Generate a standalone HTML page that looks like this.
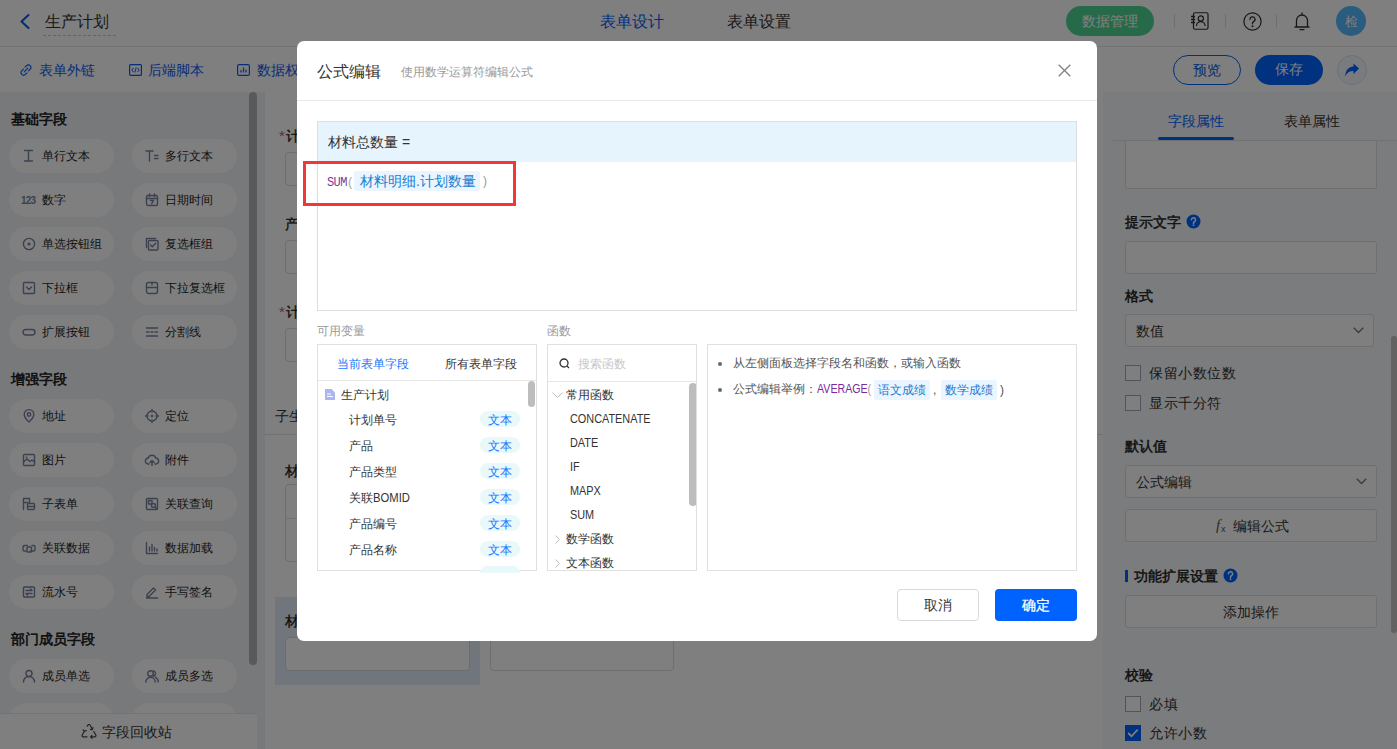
<!DOCTYPE html>
<html><head><meta charset="utf-8">
<style>
*{box-sizing:border-box;margin:0;padding:0}
html,body{width:1397px;height:749px;overflow:hidden;background:#fff;font-family:"Liberation Sans",sans-serif;color:#333}
.a{position:absolute}
.t{position:absolute;white-space:nowrap;line-height:1}
/* header */
#hdr{left:0;top:0;width:1397px;height:47px;background:#fff;border-bottom:1px solid #e6e6e6}
#tb{left:0;top:47px;width:1397px;height:45px;background:#fff}
#side{left:0;top:92px;width:265px;height:657px;background:#f1f3f6}
.pill{position:absolute;width:105px;height:34px;border-radius:17px;background:#fff}
.pill span{position:absolute;left:33px;top:11px;font-size:12px;line-height:12px;color:#1f1f1f;white-space:nowrap}
.pill svg{position:absolute;left:13px;top:10px;overflow:visible}
.sh{position:absolute;left:11px;font-size:14px;font-weight:400;-webkit-text-stroke:0.55px #1a1a1a;color:#1a1a1a;line-height:14px;white-space:nowrap}
#canvas{left:265px;top:92px;width:838px;height:657px;background:#fff}
#panel{left:1103px;top:92px;width:294px;height:657px;background:#f7f8fa}
.inp{position:absolute;left:1125px;width:252px;height:33px;border:1px solid #dedede;border-radius:3px;background:#fff}
.lbl{position:absolute;left:1125px;font-size:14px;font-weight:400;-webkit-text-stroke:0.45px #222;color:#222;line-height:14px;white-space:nowrap}
.cb{position:absolute;left:1125px;width:16px;height:16px;border:1px solid #a4a8b4;border-radius:0;background:#fff}
.cbt{position:absolute;left:1149px;font-size:14px;color:#333;line-height:14px;white-space:nowrap;letter-spacing:0.6px}
#mask{left:0;top:0;width:1397px;height:749px;background:rgba(0,0,0,0.5)}
#modal{left:297px;top:41px;width:800px;height:600px;background:#fff;border-radius:7px;overflow:hidden}
</style></head><body>
<!-- HEADER -->
<div id="hdr" class="a"></div>
<svg class="a" style="left:18px;top:13px" width="14" height="17" viewBox="0 0 14 17"><path d="M10.5 2 L3.5 8.5 L10.5 15" fill="none" stroke="#0a5af0" stroke-width="2.1" stroke-linecap="round" stroke-linejoin="round"/></svg>
<div class="t" style="left:45px;top:14px;font-size:16px;color:#333">生产计划</div>
<div class="a" style="left:43px;top:35px;width:73px;border-top:1px dashed #c8c8c8"></div>
<div class="t" style="left:600px;top:14px;font-size:16px;color:#0a5ef5">表单设计</div>
<div class="t" style="left:727px;top:14px;font-size:16px;color:#333">表单设置</div>
<div class="a" style="left:1066px;top:6px;width:88px;height:30px;border-radius:15px;background:#4dd592"></div>
<div class="t" style="left:1082px;top:14px;font-size:14px;color:#fff">数据管理</div>
<div class="a" style="left:1174px;top:14px;width:1px;height:14px;background:#ddd"></div>
<div class="a" style="left:1225px;top:14px;width:1px;height:14px;background:#ddd"></div>
<div class="a" style="left:1276px;top:14px;width:1px;height:14px;background:#ddd"></div>
<div class="a" style="left:1336px;top:6px;width:30px;height:30px;border-radius:15px;background:#52b8fd"></div>
<div class="t" style="left:1345px;top:15px;font-size:13px;color:#fff">检</div>
<!-- TOOLBAR -->
<div id="tb" class="a"></div>
<div class="t" style="left:39px;top:63px;font-size:14px;color:#0d5cf0">表单外链</div>
<div class="t" style="left:148px;top:63px;font-size:14px;color:#0d5cf0">后端脚本</div>
<div class="t" style="left:257px;top:63px;font-size:14px;color:#0d5cf0">数据权限</div>
<div class="a" style="left:1173px;top:55px;width:68px;height:30px;border-radius:15px;border:1px solid #0062ff"></div>
<div class="t" style="left:1193px;top:63px;font-size:14px;color:#0a55e0">预览</div>
<div class="a" style="left:1255px;top:55px;width:68px;height:30px;border-radius:15px;background:#0064ff"></div>
<div class="t" style="left:1275px;top:62px;font-size:14px;color:#fff">保存</div>
<div class="a" style="left:1337px;top:55px;width:30px;height:30px;border-radius:15px;border:1px solid #d5e0fa;background:#f4f7fe"></div>

<svg class="a" style="left:1190px;top:12px" width="19" height="18" viewBox="0 0 19 18"><rect x="3.5" y="0.75" width="14.5" height="16.5" rx="1.5" fill="none" stroke="#2e2e2e" stroke-width="1.2"/><circle cx="10.8" cy="6.5" r="2.6" fill="none" stroke="#2e2e2e" stroke-width="1.2"/><path d="M6.5 14a4.3 4.3 0 0 1 8.6 0" fill="none" stroke="#2e2e2e" stroke-width="1.2"/><path d="M1 4.5h4M1 7.5h4M1 10.5h4" stroke="#2e2e2e" stroke-width="1.3"/></svg>
<svg class="a" style="left:1243px;top:12px" width="19" height="19" viewBox="0 0 19 19"><circle cx="9.5" cy="9.5" r="8.6" fill="none" stroke="#2e2e2e" stroke-width="1.2"/><path d="M7 7.3a2.5 2.5 0 1 1 3.5 2.3c-.7.4-1 .8-1 1.6v.6" fill="none" stroke="#2e2e2e" stroke-width="1.3" stroke-linecap="round"/><circle cx="9.5" cy="14.2" r="1" fill="#333"/></svg>
<svg class="a" style="left:1294px;top:12px" width="16" height="19" viewBox="0 0 16 19"><path d="M8 1v1.5M2.5 15V8.5a5.5 5.5 0 0 1 11 0V15M1 15h14M6 17.6h4" fill="none" stroke="#2e2e2e" stroke-width="1.3" stroke-linecap="round"/></svg>
<svg class="a" style="left:20px;top:64px" width="12" height="12" viewBox="0 0 12 12"><path d="M5 3.2l1.6-1.6a2.5 2.5 0 0 1 3.6 3.6L8.6 6.8M7 8.8L5.4 10.4a2.5 2.5 0 0 1-3.6-3.6L3.4 5.2M4.2 7.8l3.6-3.6" fill="none" stroke="#0d5cf0" stroke-width="1.2" stroke-linecap="round"/></svg>
<svg class="a" style="left:129px;top:64px" width="13" height="12" viewBox="0 0 13 12"><rect x="0.6" y="0.6" width="11.8" height="10.8" rx="1" fill="none" stroke="#0d5cf0" stroke-width="1.2"/><path d="M4.5 4L2.8 6l1.7 2M8.5 4l1.7 2-1.7 2M7.2 3.5L5.8 8.5" fill="none" stroke="#0d5cf0" stroke-width="1"/></svg>
<svg class="a" style="left:237px;top:64px" width="13" height="12" viewBox="0 0 13 12"><rect x="0.6" y="0.6" width="11.8" height="10.8" rx="1.5" fill="none" stroke="#0d5cf0" stroke-width="1.2"/><path d="M4 8.5V6M6.5 8.5V3.5M9 8.5V5.5" stroke="#0d5cf0" stroke-width="1.2"/></svg>
<svg class="a" style="left:1344px;top:63px" width="16" height="14" viewBox="0 0 15 14"><path d="M14.5 5.5L9 0.5v3C4 3.8 0.8 7.5 0.8 13.5c1.5-3.8 4.2-5.5 8.2-5.5v3z" fill="#0062ff"/></svg>
<!-- SIDEBAR -->
<div id="side" class="a"></div>
<div class="sh" style="top:112px">基础字段</div>
<div class="sh" style="top:372px">增强字段</div>
<div class="sh" style="top:632px">部门成员字段</div>
<div id="pills">
<div class="pill" style="left:9px;top:139px"><svg width="14" height="14" viewBox="0 0 14 14"><path d="M2.5 1.5h8M6.5 1.5v10.5M2.5 12h8" fill="none" stroke="#76829e" stroke-width="1.4" stroke-linecap="round" stroke-linejoin="round"/></svg><span>单行文本</span></div>
<div class="pill" style="left:132px;top:139px"><svg width="14" height="14" viewBox="0 0 14 14"><path d="M1 2h7M4.5 2v10M9.5 6.5h3.5M9.5 9.5h3.5" fill="none" stroke="#76829e" stroke-width="1.4" stroke-linecap="round" stroke-linejoin="round"/></svg><span>多行文本</span></div>
<div class="pill" style="left:9px;top:183px"><svg width="14" height="14" viewBox="0 0 14 14"><text x="-1" y="11" font-family="Liberation Sans" font-weight="bold" font-size="10" fill="#76829e" textLength="15">123</text></svg><span>数字</span></div>
<div class="pill" style="left:132px;top:183px"><svg width="14" height="14" viewBox="0 0 14 14"><rect x="1.5" y="2.5" width="11" height="10" rx="1.5" fill="none" stroke="#76829e" stroke-width="1.4" stroke-linecap="round" stroke-linejoin="round"/><path d="M1.5 5.5h11M4.5 1v2.5M9.5 1v2.5M5.5 7.5h3l-2 3.5" fill="none" stroke="#76829e" stroke-width="1.4" stroke-linecap="round" stroke-linejoin="round"/></svg><span>日期时间</span></div>
<div class="pill" style="left:9px;top:227px"><svg width="14" height="14" viewBox="0 0 14 14"><circle cx="7" cy="7" r="5.6" fill="none" stroke="#76829e" stroke-width="1.4" stroke-linecap="round" stroke-linejoin="round"/><circle cx="7" cy="7" r="1.6" fill="#76829e"/></svg><span>单选按钮组</span></div>
<div class="pill" style="left:132px;top:227px"><svg width="14" height="14" viewBox="0 0 14 14"><path d="M1.5 10.5v-9h9" fill="none" stroke="#76829e" stroke-width="1.4" stroke-linecap="round" stroke-linejoin="round"/><rect x="3.5" y="3.5" width="9.5" height="9.5" rx="1" fill="none" stroke="#76829e" stroke-width="1.4" stroke-linecap="round" stroke-linejoin="round"/><path d="M5.5 8l1.8 1.8 3.4-3.6" fill="none" stroke="#76829e" stroke-width="1.4" stroke-linecap="round" stroke-linejoin="round"/></svg><span>复选框组</span></div>
<div class="pill" style="left:9px;top:271px"><svg width="14" height="14" viewBox="0 0 14 14"><rect x="1.5" y="1.5" width="11" height="11" rx="1" fill="none" stroke="#76829e" stroke-width="1.4" stroke-linecap="round" stroke-linejoin="round"/><path d="M4.5 6l2.5 2.5 2.5-2.5" fill="none" stroke="#76829e" stroke-width="1.4" stroke-linecap="round" stroke-linejoin="round"/></svg><span>下拉框</span></div>
<div class="pill" style="left:132px;top:271px"><svg width="14" height="14" viewBox="0 0 14 14"><rect x="1.5" y="1.5" width="11" height="11" rx="2" fill="none" stroke="#76829e" stroke-width="1.4" stroke-linecap="round" stroke-linejoin="round"/><path d="M1.5 6.5h11M7 1.5v2.5" fill="none" stroke="#76829e" stroke-width="1.4" stroke-linecap="round" stroke-linejoin="round"/></svg><span>下拉复选框</span></div>
<div class="pill" style="left:9px;top:315px"><svg width="14" height="14" viewBox="0 0 14 14"><rect x="1" y="4.5" width="12" height="5.5" rx="2.75" fill="none" stroke="#76829e" stroke-width="1.4" stroke-linecap="round" stroke-linejoin="round"/></svg><span>扩展按钮</span></div>
<div class="pill" style="left:132px;top:315px"><svg width="14" height="14" viewBox="0 0 14 14"><path d="M1.5 3h11M1.5 7h2.5M6 7h2M10 7h2.5M1.5 11h11" fill="none" stroke="#76829e" stroke-width="1.4" stroke-linecap="round" stroke-linejoin="round"/></svg><span>分割线</span></div>
<div class="pill" style="left:9px;top:399px"><svg width="14" height="14" viewBox="0 0 14 14"><path d="M7 13s-4.8-4.6-4.8-7.6a4.8 4.8 0 0 1 9.6 0C11.8 8.4 7 13 7 13z" fill="none" stroke="#76829e" stroke-width="1.4" stroke-linecap="round" stroke-linejoin="round"/><circle cx="7" cy="5.5" r="1.7" fill="none" stroke="#76829e" stroke-width="1.4" stroke-linecap="round" stroke-linejoin="round"/></svg><span>地址</span></div>
<div class="pill" style="left:132px;top:399px"><svg width="14" height="14" viewBox="0 0 14 14"><circle cx="7" cy="7" r="5" fill="none" stroke="#76829e" stroke-width="1.4" stroke-linecap="round" stroke-linejoin="round"/><circle cx="7" cy="7" r="1.3" fill="#76829e"/><path d="M7 0.5v2.5M7 11v2.5M0.5 7h2.5M11 7h2.5" fill="none" stroke="#76829e" stroke-width="1.4" stroke-linecap="round" stroke-linejoin="round"/></svg><span>定位</span></div>
<div class="pill" style="left:9px;top:443px"><svg width="14" height="14" viewBox="0 0 14 14"><rect x="1.5" y="1.5" width="11" height="11" rx="1" fill="none" stroke="#76829e" stroke-width="1.4" stroke-linecap="round" stroke-linejoin="round"/><path d="M1.5 9l3.5-3 3 2.5 2-1.5 2.5 2" fill="none" stroke="#76829e" stroke-width="1.4" stroke-linecap="round" stroke-linejoin="round"/><circle cx="4.5" cy="4.5" r="0.9" fill="#76829e"/></svg><span>图片</span></div>
<div class="pill" style="left:132px;top:443px"><svg width="14" height="14" viewBox="0 0 14 14"><path d="M4 11H3.5a3 3 0 0 1-.3-6 4 4 0 0 1 7.6 0A3 3 0 0 1 10.5 11H10M7 12.5V7.5M5 9.5l2-2 2 2" fill="none" stroke="#76829e" stroke-width="1.4" stroke-linecap="round" stroke-linejoin="round"/></svg><span>附件</span></div>
<div class="pill" style="left:9px;top:487px"><svg width="14" height="14" viewBox="0 0 14 14"><path d="M1.5 12.5v-11h6v4M1.5 5.5h4" fill="none" stroke="#76829e" stroke-width="1.4" stroke-linecap="round" stroke-linejoin="round"/><rect x="5.5" y="6.5" width="7" height="6" rx="1" fill="none" stroke="#76829e" stroke-width="1.4" stroke-linecap="round" stroke-linejoin="round"/><path d="M5.5 9.5h7" fill="none" stroke="#76829e" stroke-width="1.4" stroke-linecap="round" stroke-linejoin="round"/></svg><span>子表单</span></div>
<div class="pill" style="left:132px;top:487px"><svg width="14" height="14" viewBox="0 0 14 14"><rect x="1.5" y="1.5" width="11" height="11" rx="1" fill="none" stroke="#76829e" stroke-width="1.4" stroke-linecap="round" stroke-linejoin="round"/><rect x="3.5" y="3.5" width="3.5" height="3.5" fill="none" stroke="#76829e" stroke-width="1.4" stroke-linecap="round" stroke-linejoin="round"/><circle cx="8.5" cy="8.5" r="2" fill="none" stroke="#76829e" stroke-width="1.4" stroke-linecap="round" stroke-linejoin="round"/><path d="M10 10l2 2" fill="none" stroke="#76829e" stroke-width="1.4" stroke-linecap="round" stroke-linejoin="round"/></svg><span>关联查询</span></div>
<div class="pill" style="left:9px;top:531px"><svg width="14" height="14" viewBox="0 0 14 14"><path d="M5.5 4.5H2.5a1.5 1.5 0 0 0-1.5 1.5v2.5a1.5 1.5 0 0 0 1.5 1.5H4M8.5 10h3a1.5 1.5 0 0 0 1.5-1.5V6a1.5 1.5 0 0 0-1.5-1.5H10" fill="none" stroke="#76829e" stroke-width="1.4" stroke-linecap="round" stroke-linejoin="round"/><rect x="5" y="6" width="4.5" height="5" rx="0.8" fill="none" stroke="#76829e" stroke-width="1.4" stroke-linecap="round" stroke-linejoin="round"/></svg><span>关联数据</span></div>
<div class="pill" style="left:132px;top:531px"><svg width="14" height="14" viewBox="0 0 14 14"><path d="M1.5 1.5v11h11M4.5 10V6M7 10V3.5M9.5 10V6.5M12 10V8" fill="none" stroke="#76829e" stroke-width="1.4" stroke-linecap="round" stroke-linejoin="round"/></svg><span>数据加载</span></div>
<div class="pill" style="left:9px;top:575px"><svg width="14" height="14" viewBox="0 0 14 14"><rect x="1.5" y="2" width="11" height="10" rx="1" fill="none" stroke="#76829e" stroke-width="1.4" stroke-linecap="round" stroke-linejoin="round"/><path d="M4 5.5h6M4 8.5h6M8.5 4l1.5 1.5M5.5 10L4 8.5" fill="none" stroke="#76829e" stroke-width="1.4" stroke-linecap="round" stroke-linejoin="round"/></svg><span>流水号</span></div>
<div class="pill" style="left:132px;top:575px"><svg width="14" height="14" viewBox="0 0 14 14"><path d="M2 9.5l6.5-6.5 2 2L4 11.5H2zM1.5 13h11" fill="none" stroke="#76829e" stroke-width="1.4" stroke-linecap="round" stroke-linejoin="round"/></svg><span>手写签名</span></div>
<div class="pill" style="left:9px;top:659px"><svg width="14" height="14" viewBox="0 0 14 14"><circle cx="7" cy="4.5" r="3" fill="none" stroke="#76829e" stroke-width="1.4" stroke-linecap="round" stroke-linejoin="round"/><path d="M1.5 13a5.5 5.5 0 0 1 11 0" fill="none" stroke="#76829e" stroke-width="1.4" stroke-linecap="round" stroke-linejoin="round"/></svg><span>成员单选</span></div>
<div class="pill" style="left:132px;top:659px"><svg width="14" height="14" viewBox="0 0 14 14"><circle cx="5.5" cy="4.5" r="2.8" fill="none" stroke="#76829e" stroke-width="1.4" stroke-linecap="round" stroke-linejoin="round"/><path d="M0.8 13a4.7 4.7 0 0 1 9.4 0M8.5 1.8a2.8 2.8 0 0 1 0 5.4M10.5 8.3a4.7 4.7 0 0 1 2.7 4.7" fill="none" stroke="#76829e" stroke-width="1.4" stroke-linecap="round" stroke-linejoin="round"/></svg><span>成员多选</span></div>
<div class="pill" style="left:9px;top:703px"><svg width="14" height="14" viewBox="0 0 14 14"><circle cx="7" cy="4.5" r="3" fill="none" stroke="#76829e" stroke-width="1.4" stroke-linecap="round" stroke-linejoin="round"/><path d="M1.5 13a5.5 5.5 0 0 1 11 0" fill="none" stroke="#76829e" stroke-width="1.4" stroke-linecap="round" stroke-linejoin="round"/></svg><span>成员单选</span></div>
<div class="pill" style="left:132px;top:703px"><svg width="14" height="14" viewBox="0 0 14 14"><circle cx="5.5" cy="4.5" r="2.8" fill="none" stroke="#76829e" stroke-width="1.4" stroke-linecap="round" stroke-linejoin="round"/><path d="M0.8 13a4.7 4.7 0 0 1 9.4 0M8.5 1.8a2.8 2.8 0 0 1 0 5.4M10.5 8.3a4.7 4.7 0 0 1 2.7 4.7" fill="none" stroke="#76829e" stroke-width="1.4" stroke-linecap="round" stroke-linejoin="round"/></svg><span>成员多选</span></div>
</div>
<div class="a" style="left:249px;top:92px;width:8px;height:573px;border-radius:4px;background:#b3b3b3"></div>
<div class="a" style="left:0;top:713px;width:257px;height:36px;background:#fff;border-top:1px solid #e8e8e8"></div>
<div class="t" style="left:102px;top:725px;font-size:14px;color:#333">字段回收站</div>
<svg class="a" style="left:81px;top:724px" width="16" height="15" viewBox="0 0 16 15"><path d="M6.2 2.2L7 1a1.2 1.2 0 0 1 2 0l2.3 4M12.8 7.5l2 3.5a1.2 1.2 0 0 1-1 1.8H9.5M6 12.8H2.2a1.2 1.2 0 0 1-1-1.8L3.4 7.3M9.3 5.3l2 .3.6-2M11 14.3l-1.5-1.5 1.5-1.5M2.2 6l1.4 1.3 1.8-.8" fill="none" stroke="#444" stroke-width="1.2" stroke-linecap="round" stroke-linejoin="round"/></svg>
<!-- CANVAS -->
<div id="canvas" class="a"></div>
<div class="t" style="left:279px;top:128px;font-size:15px;color:#e34d4d">*</div>
<div class="t" style="left:286px;top:129px;font-size:14px;font-weight:400;-webkit-text-stroke:0.3px #222;color:#222">计划单号</div>
<div class="a" style="left:285px;top:152px;width:400px;height:34px;border:1px solid #dcdcdc;border-radius:4px"></div>
<div class="t" style="left:285px;top:217px;font-size:14px;font-weight:400;-webkit-text-stroke:0.3px #222;color:#222">产品</div>
<div class="a" style="left:285px;top:240px;width:400px;height:34px;border:1px solid #dcdcdc;border-radius:4px"></div>
<div class="t" style="left:279px;top:304px;font-size:15px;color:#e34d4d">*</div>
<div class="t" style="left:286px;top:305px;font-size:14px;font-weight:400;-webkit-text-stroke:0.3px #222;color:#222">计划日期</div>
<div class="a" style="left:285px;top:328px;width:400px;height:34px;border:1px solid #dcdcdc;border-radius:4px"></div>
<div class="t" style="left:275px;top:409px;font-size:14px;color:#333">子生产计划</div>
<div class="a" style="left:265px;top:434px;width:838px;height:1px;background:#e4e4e4"></div>
<div class="t" style="left:285px;top:464px;font-size:14px;font-weight:400;-webkit-text-stroke:0.3px #222;color:#222">材料明细</div>
<div class="a" style="left:285px;top:484px;width:500px;height:78px;border:1px solid #dcdcdc;border-radius:4px"></div>
<div class="a" style="left:286px;top:518px;width:498px;height:1px;background:#e4e4e4"></div>
<div class="a" style="left:275px;top:597px;width:205px;height:88px;background:#e3eaf9"></div>
<div class="t" style="left:285px;top:614px;font-size:14px;font-weight:400;-webkit-text-stroke:0.3px #222;color:#222">材料总数量</div>
<div class="a" style="left:285px;top:637px;width:185px;height:34px;border:1px solid #d6d9de;border-radius:4px;background:#fff"></div>
<div class="a" style="left:490px;top:637px;width:184px;height:34px;border:1px solid #dcdcdc;border-radius:4px;background:#fff"></div>
<!-- PANEL -->
<div id="panel" class="a"></div>
<div class="t" style="left:1168px;top:114px;font-size:14px;color:#0062ff">字段属性</div>
<div class="t" style="left:1284px;top:114px;font-size:14px;color:#333">表单属性</div>
<div class="a" style="left:1111px;top:140px;width:286px;height:1px;background:#e2e2e2"></div>
<div class="a" style="left:1158px;top:137px;width:76px;height:3px;background:#0062ff;border-radius:2px"></div>
<div class="a" style="left:1125px;top:141px;width:252px;height:48px;border:1px solid #dedede;border-top:none;border-radius:0 0 2px 2px;background:#fff"></div>
<div class="lbl" style="top:215px">提示文字</div>
<div class="inp" style="top:241px"></div>
<div class="lbl" style="top:289px">格式</div>
<div class="inp" style="top:314px;width:249px"></div>
<div class="t" style="left:1136px;top:324px;font-size:14px">数值</div>
<div class="cb" style="top:365px"></div><div class="cbt" style="top:366px">保留小数位数</div>
<div class="cb" style="top:395px"></div><div class="cbt" style="top:396px">显示千分符</div>
<div class="lbl" style="top:439px">默认值</div>
<div class="inp" style="top:465px"></div>
<div class="t" style="left:1136px;top:475px;font-size:14px">公式编辑</div>
<div class="inp" style="top:509px"></div>
<div class="t" style="left:1233px;top:519px;font-size:14px">编辑公式</div>
<div class="a" style="left:1125px;top:570px;width:3px;height:12px;background:#0062ff"></div>
<div class="lbl" style="left:1134px;top:569px">功能扩展设置</div>
<div class="inp" style="top:595px"></div>
<div class="t" style="left:1223px;top:605px;font-size:14px">添加操作</div>
<div class="lbl" style="top:668px">校验</div>
<div class="cb" style="top:696px"></div><div class="cbt" style="top:697px">必填</div>
<div class="cb" style="top:725px;background:#0062ff;border-color:#0062ff"></div><div class="cbt" style="top:726px">允许小数</div>
<div class="a" style="left:1391px;top:336px;width:6px;height:297px;border-radius:3px;background:#c4c4c4"></div>


<svg class="a" style="left:1186px;top:214px" width="15" height="15" viewBox="0 0 15 15"><circle cx="7.5" cy="7.5" r="7" fill="#0062ff"/><path d="M5.4 5.8a2.1 2.1 0 1 1 3 1.9c-.6.3-.9.7-.9 1.3v.4" fill="none" stroke="#fff" stroke-width="1.5" stroke-linecap="round"/><circle cx="7.5" cy="11.2" r="0.9" fill="#fff"/></svg>
<svg class="a" style="left:1223px;top:568px" width="15" height="15" viewBox="0 0 15 15"><circle cx="7.5" cy="7.5" r="7" fill="#0062ff"/><path d="M5.4 5.8a2.1 2.1 0 1 1 3 1.9c-.6.3-.9.7-.9 1.3v.4" fill="none" stroke="#fff" stroke-width="1.5" stroke-linecap="round"/><circle cx="7.5" cy="11.2" r="0.9" fill="#fff"/></svg>
<svg class="a" style="left:1353px;top:327px" width="11" height="7" viewBox="0 0 11 7"><path d="M0.8 0.8l4.7 4.7 4.7-4.7" fill="none" stroke="#777" stroke-width="1.3"/></svg>
<svg class="a" style="left:1356px;top:478px" width="11" height="7" viewBox="0 0 11 7"><path d="M0.8 0.8l4.7 4.7 4.7-4.7" fill="none" stroke="#777" stroke-width="1.3"/></svg>
<div class="t" style="left:1216px;top:518px;font-size:15px;font-style:italic;color:#555;font-family:'Liberation Serif',serif">f</div>
<div class="t" style="left:1221px;top:525px;font-size:9px;color:#555">x</div>
<svg class="a" style="left:1127px;top:728px" width="12" height="10" viewBox="0 0 12 10"><path d="M1.2 5l3.3 3.3 6.3-6.8" fill="none" stroke="#fff" stroke-width="1.8"/></svg>
<div id="mask" class="a"></div>
<!-- MODAL -->
<div id="modal" class="a">
<div class="t" style="left:20px;top:23px;font-size:16px;color:#333">公式编辑</div>
<div class="t" style="left:104px;top:25px;font-size:12px;color:#999">使用数学运算符编辑公式</div>
<svg class="a" style="left:761px;top:23px" width="13" height="13" viewBox="0 0 13 13"><path d="M0.7 0.7L12.3 12.3M12.3 0.7L0.7 12.3" stroke="#808080" stroke-width="1.3" fill="none"/></svg>
<div class="a" style="left:0;top:59px;width:800px;height:1px;background:#e8e8e8"></div>
<div class="a" style="left:20px;top:80px;width:760px;height:190px;border:1px solid #dedede;background:#fff"></div>
<div class="a" style="left:21px;top:81px;width:758px;height:40px;background:#e6f4fe"></div>
<div class="t" style="left:31px;top:94px;font-size:14px;color:#333">材料总数量 =</div>
<div class="t" style="left:30px;top:136px;font-size:12px;color:#7b3a9b;font-family:'Liberation Mono',monospace;letter-spacing:-0.6px">SUM<span style="color:#aaa">(</span></div>
<div class="a" style="left:57px;top:130px;width:126px;height:20px;background:#ebf5ff;border-radius:2px"></div>
<div class="t" style="left:63px;top:133px;font-size:14px;color:#1a80d0">材料明细.计划数量</div>
<div class="t" style="left:186px;top:134px;font-size:12px;color:#999">)</div>
<div class="a" style="left:6px;top:120px;width:213px;height:45px;border:3px solid #f03838"></div>
<div class="t" style="left:20px;top:284px;font-size:12px;color:#999">可用变量</div>
<div class="t" style="left:250px;top:284px;font-size:12px;color:#999">函数</div>
<!-- vars panel -->
<div class="a" style="left:20px;top:303px;width:220px;height:227px;border:1px solid #e0e0e0"></div>
<div class="a" style="left:21px;top:339px;width:218px;height:1px;background:#e6e6e6"></div>
<div class="t" style="left:40px;top:317px;font-size:12px;color:#1677ff">当前表单字段</div>
<div class="t" style="left:148px;top:317px;font-size:12px;color:#333">所有表单字段</div>
<svg class="a" style="left:28px;top:348px" width="10" height="11" viewBox="0 0 10 11"><path d="M0 0h6.5L10 3.5V11H0z" fill="#a9b5f5"/><path d="M2 5h4M2 7.5h6" stroke="#fff" stroke-width="1"/></svg>
<div class="t" style="left:44px;top:348px;font-size:12px;color:#333">生产计划</div>
<div class="a" style="left:231px;top:340px;width:7px;height:26px;border-radius:4px;background:#bdbdbd"></div>
<div class="t" style="left:52px;top:373px;font-size:12px;color:#333">计划单号</div>
<div class="a" style="left:183px;top:370px;width:40px;height:16px;border-radius:8px;background:#e9f8f8"></div>
<div class="t" style="left:191px;top:373px;font-size:12px;color:#1677ff">文本</div>
<div class="t" style="left:52px;top:399px;font-size:12px;color:#333">产品</div>
<div class="a" style="left:183px;top:396px;width:40px;height:16px;border-radius:8px;background:#e9f8f8"></div>
<div class="t" style="left:191px;top:399px;font-size:12px;color:#1677ff">文本</div>
<div class="t" style="left:52px;top:425px;font-size:12px;color:#333">产品类型</div>
<div class="a" style="left:183px;top:422px;width:40px;height:16px;border-radius:8px;background:#e9f8f8"></div>
<div class="t" style="left:191px;top:425px;font-size:12px;color:#1677ff">文本</div>
<div class="t" style="left:52px;top:451px;font-size:12px;color:#333">关联<span style="display:inline-block;font-size:12.5px;transform:scaleX(.9);transform-origin:0 50%">BOMID</span></div>
<div class="a" style="left:183px;top:448px;width:40px;height:16px;border-radius:8px;background:#e9f8f8"></div>
<div class="t" style="left:191px;top:451px;font-size:12px;color:#1677ff">文本</div>
<div class="t" style="left:52px;top:477px;font-size:12px;color:#333">产品编号</div>
<div class="a" style="left:183px;top:474px;width:40px;height:16px;border-radius:8px;background:#e9f8f8"></div>
<div class="t" style="left:191px;top:477px;font-size:12px;color:#1677ff">文本</div>
<div class="t" style="left:52px;top:503px;font-size:12px;color:#333">产品名称</div>
<div class="a" style="left:183px;top:500px;width:40px;height:16px;border-radius:8px;background:#e9f8f8"></div>
<div class="t" style="left:191px;top:503px;font-size:12px;color:#1677ff">文本</div>
<div class="a" style="left:183px;top:525px;width:40px;height:7px;border-radius:8px 8px 0 0;background:#e9f8f8;overflow:hidden"></div>
<!-- funcs panel -->
<div class="a" style="left:250px;top:303px;width:150px;height:227px;border:1px solid #e0e0e0;overflow:hidden"><svg class="a" style="left:11px;top:13px" width="11" height="11" viewBox="0 0 11 11"><circle cx="5" cy="5" r="4" fill="none" stroke="#333" stroke-width="1.3"/><path d="M8 8l2 2" stroke="#333" stroke-width="1.3"/></svg>
<div class="t" style="left:30px;top:13px;font-size:12px;color:#c8c8c8">搜索函数</div>
<div class="a" style="left:0;top:36px;width:150px;height:1px;background:#e6e6e6"></div>
<svg class="a" style="left:4px;top:47px" width="11" height="6" viewBox="0 0 11 6"><path d="M0.5 0.5l5 5 5-5" fill="none" stroke="#bbb" stroke-width="1"/></svg>
<div class="t" style="left:18px;top:44px;font-size:12px;color:#333">常用函数</div>
<div class="t" style="left:22px;top:68px;font-size:12.5px;color:#333;transform:scaleX(.87);transform-origin:0 50%">CONCATENATE</div>
<div class="t" style="left:22px;top:92px;font-size:12.5px;color:#333;transform:scaleX(.87);transform-origin:0 50%">DATE</div>
<div class="t" style="left:22px;top:116px;font-size:12.5px;color:#333;transform:scaleX(.87);transform-origin:0 50%">IF</div>
<div class="t" style="left:22px;top:140px;font-size:12.5px;color:#333;transform:scaleX(.87);transform-origin:0 50%">MAPX</div>
<div class="t" style="left:22px;top:164px;font-size:12.5px;color:#333;transform:scaleX(.87);transform-origin:0 50%">SUM</div>
<svg class="a" style="left:7px;top:190px" width="5" height="9" viewBox="0 0 5 9"><path d="M0.5 0.5l4 4-4 4" fill="none" stroke="#bbb" stroke-width="1"/></svg>
<div class="t" style="left:18px;top:188px;font-size:12px;color:#333">数学函数</div>
<svg class="a" style="left:7px;top:214px" width="5" height="9" viewBox="0 0 5 9"><path d="M0.5 0.5l4 4-4 4" fill="none" stroke="#bbb" stroke-width="1"/></svg>
<div class="t" style="left:18px;top:212px;font-size:12px;color:#333">文本函数</div>
<div class="a" style="left:141px;top:38px;width:8px;height:123px;border-radius:4px;background:#bdbdbd"></div></div>
<!-- help -->
<div class="a" style="left:410px;top:303px;width:370px;height:227px;border:1px solid #e0e0e0"></div>
<div class="a" style="left:421px;top:321px;width:4px;height:4px;border-radius:2px;background:#666"></div>
<div class="t" style="left:436px;top:316px;font-size:12px;color:#555">从左侧面板选择字段名和函数，或输入函数</div>
<div class="a" style="left:421px;top:347px;width:4px;height:4px;border-radius:2px;background:#666"></div>
<div class="t" style="left:436px;top:342px;font-size:12px;color:#555">公式编辑举例：</div>
<div class="t" style="left:520px;top:342px;font-size:12.5px;color:#7b2a9a;transform:scaleX(.85);transform-origin:0 50%">AVERAGE<span style="color:#999">(</span></div>
<div class="a" style="left:577px;top:339px;width:56px;height:20px;background:#ebf5ff;border-radius:2px"></div>
<div class="t" style="left:581px;top:343px;font-size:12px;color:#1f7ad0">语文成绩</div>
<div class="t" style="left:636px;top:343px;font-size:12px;color:#555">,</div>
<div class="a" style="left:644px;top:339px;width:56px;height:20px;background:#ebf5ff;border-radius:2px"></div>
<div class="t" style="left:648px;top:343px;font-size:12px;color:#1f7ad0">数学成绩</div>
<div class="t" style="left:703px;top:343px;font-size:12px;color:#555">)</div>
<!-- buttons -->
<div class="a" style="left:600px;top:548px;width:82px;height:32px;border:1px solid #d9d9d9;border-radius:4px"></div>
<div class="t" style="left:627px;top:557px;font-size:14px;color:#333">取消</div>
<div class="a" style="left:698px;top:548px;width:82px;height:32px;border-radius:4px;background:#0062ff"></div>
<div class="t" style="left:725px;top:557px;font-size:14px;color:#fff;-webkit-text-stroke:0.25px #fff">确定</div>
</div>
</body></html>
